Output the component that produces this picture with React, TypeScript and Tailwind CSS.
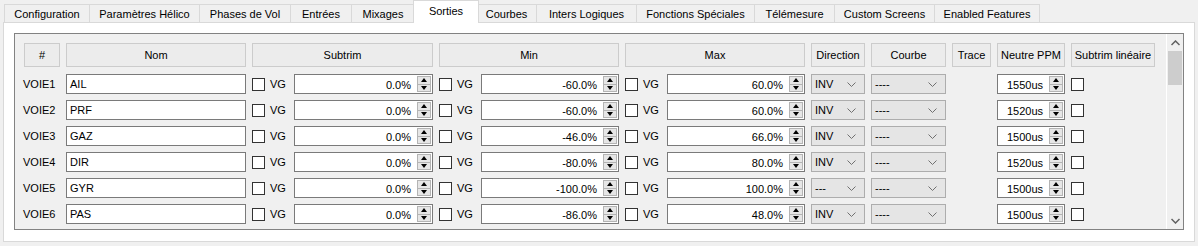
import React from "react";

const tabs = [
  { t: "Configuration", w: "w-[86px]" },
  { t: "Paramètres Hélico", w: "w-[110px]" },
  { t: "Phases de Vol", w: "w-[91px]" },
  { t: "Entrées", w: "w-[61px]" },
  { t: "Mixages", w: "w-[63px]" },
  { t: "Sorties", w: "w-[60px]", sel: true },
  { t: "Courbes", w: "w-[60px]" },
  { t: "Inters Logiques", w: "w-[100px]" },
  { t: "Fonctions Spéciales", w: "w-[118px]" },
  { t: "Télémesure", w: "w-[80px]" },
  { t: "Custom Screens", w: "w-[100px]" },
  { t: "Enabled Features", w: "w-[105px]" },
];

const rows = [
  ["VOIE1", "AIL", "0.0%", "-60.0%", "60.0%", "INV", "1550us"],
  ["VOIE2", "PRF", "0.0%", "-60.0%", "60.0%", "INV", "1520us"],
  ["VOIE3", "GAZ", "0.0%", "-46.0%", "66.0%", "INV", "1500us"],
  ["VOIE4", "DIR", "0.0%", "-80.0%", "80.0%", "INV", "1520us"],
  ["VOIE5", "GYR", "0.0%", "-100.0%", "100.0%", "---", "1500us"],
  ["VOIE6", "PAS", "0.0%", "-86.0%", "48.0%", "INV", "1500us"],
];

const cols =
  "grid grid-cols-[36px_180px_181px_180px_180px_54px_75px_39px_68px_84px] gap-x-[6px]";

function Check() {
  return <div className="w-[13px] h-[13px] border border-[#333333] bg-white shrink-0" />;
}

function Spin({ v, w }: { v: string; w: string }) {
  return (
    <div className={`flex h-[20px] border border-[#7a7a7a] bg-white ${w}`}>
      <span className="flex-1 text-right pr-[5px] leading-[18px] pt-[1px]">{v}</span>
      <div className="flex flex-col w-[14px] m-[1px] border border-[#b4b4b4] bg-[#e6e6e6]">
        <div className="flex-1 flex items-center justify-center border-b border-[#b4b4b4]">
          <svg width="6" height="4" viewBox="0 0 6 4">
            <path d="M0 4 L3 0 L6 4 Z" fill="#000" />
          </svg>
        </div>
        <div className="flex-1 flex items-center justify-center">
          <svg width="6" height="4" viewBox="0 0 6 4">
            <path d="M0 0 L3 4 L6 0 Z" fill="#000" />
          </svg>
        </div>
      </div>
    </div>
  );
}

function Combo({ v }: { v: string }) {
  return (
    <div className="flex items-center justify-between h-[20px] border border-[#adadad] bg-[#e5e5e5] pl-[3px] pr-[8px]">
      <span className="leading-[18px]">{v}</span>
      <svg width="9" height="5" viewBox="0 0 9 5">
        <path d="M0.5 0.5 L4.5 4.5 L8.5 0.5" fill="none" stroke="#707070" strokeWidth="1" />
      </svg>
    </div>
  );
}

function Head({ t }: { t: string }) {
  return (
    <div className="h-[24px] flex items-center justify-center border border-[#cccccc] bg-[#ececec]">
      {t}
    </div>
  );
}

function VgCell({ v }: { v: string }) {
  return (
    <div className="flex items-center">
      <Check />
      <span className="ml-[5px]">VG</span>
      <div className="ml-auto">
        <Spin v={v} w="w-[138px]" />
      </div>
    </div>
  );
}

export default function App() {
  return (
    <div
      className="w-[1198px] h-[246px] bg-[#f0f0f0] pt-[2px] px-[3px] text-[11px] text-black"
      style={{ fontFamily: '"Liberation Sans", Arial, sans-serif' }}
    >
      <div className="flex items-end h-[20px] pl-[1px]">
        {tabs.map((tb) =>
          tb.sel ? (
            <div
              key={tb.t}
              className={`relative z-10 -mx-[2px] -mb-px h-[21px] ${tb.w} box-content px-[2px] bg-white border border-b-0 border-[#d9d9d9] flex items-center justify-center pb-[1px]`}
            >
              {tb.t}
            </div>
          ) : (
            <div
              key={tb.t}
              className={`h-[18px] ${tb.w} bg-[#f0f0f0] border border-b-0 border-l-0 first:border-l border-[#d9d9d9] flex items-center justify-center pt-[1px]`}
            >
              {tb.t}
            </div>
          )
        )}
      </div>
      <div className="w-[1192px] h-[220px] border border-[#d9d9d9] bg-white p-[10px]">
        <div className="flex h-[197px] border border-[#828282] bg-[#f0f0f0]">
          <div className="flex-1 pl-[9px] pt-[9px]">
            <div className={`${cols} mb-[7px]`}>
              <Head t="#" />
              <Head t="Nom" />
              <Head t="Subtrim" />
              <Head t="Min" />
              <Head t="Max" />
              <Head t="Direction" />
              <Head t="Courbe" />
              <Head t="Trace" />
              <Head t="Neutre PPM" />
              <Head t="Subtrim linéaire" />
            </div>
            <div className="flex flex-col gap-[6px]">
              {rows.map((r) => (
                <div key={r[0]} className={`${cols} h-[20px] items-center`}>
                  <span className="-ml-px">{r[0]}</span>
                  <div className="h-[20px] border border-[#7a7a7a] bg-white pl-[3px] leading-[18px]">
                    {r[1]}
                  </div>
                  <div className="flex items-center">
                    <Check />
                    <span className="ml-[5px]">VG</span>
                    <div className="ml-auto">
                      <Spin v={r[2]} w="w-[139px]" />
                    </div>
                  </div>
                  <VgCell v={r[3]} />
                  <VgCell v={r[4]} />
                  <Combo v={r[5]} />
                  <Combo v="----" />
                  <div />
                  <Spin v={r[6]} w="w-[68px]" />
                  <Check />
                </div>
              ))}
            </div>
          </div>
          <div className="w-[17px] flex flex-col border-l border-white bg-[#f0f0f0]">
            <div className="h-[17px] flex items-center justify-center">
              <svg width="9" height="6" viewBox="0 0 9 6">
                <path d="M0.5 5 L4.5 1 L8.5 5" fill="none" stroke="#606060" strokeWidth="1.5" />
              </svg>
            </div>
            <div className="h-[34px] mx-px bg-[#cdcdcd]" />
            <div className="flex-1" />
            <div className="h-[17px] flex items-center justify-center">
              <svg width="9" height="6" viewBox="0 0 9 6">
                <path d="M0.5 1 L4.5 5 L8.5 1" fill="none" stroke="#606060" strokeWidth="1.5" />
              </svg>
            </div>
          </div>
        </div>
      </div>
    </div>
  );
}
